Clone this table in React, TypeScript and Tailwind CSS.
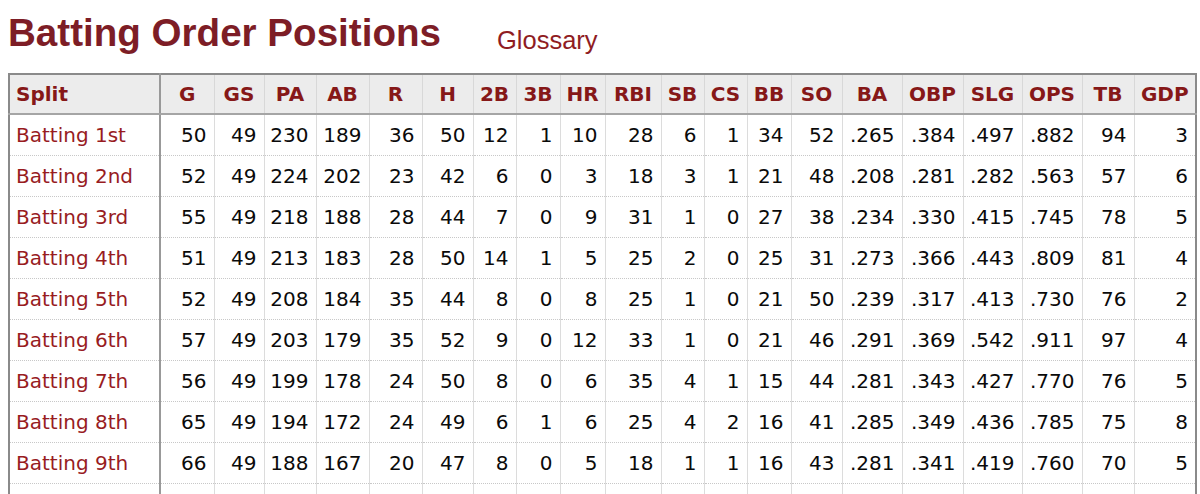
import React from 'react';

const cols = [
  { k: 'G', w: 'w-[54px]' },
  { k: 'GS', w: 'w-[50px]' },
  { k: 'PA', w: 'w-[52px]' },
  { k: 'AB', w: 'w-[53px]' },
  { k: 'R', w: 'w-[53px]' },
  { k: 'H', w: 'w-[51px]' },
  { k: '2B', w: 'w-[43px]' },
  { k: '3B', w: 'w-[44px]' },
  { k: 'HR', w: 'w-[45px]' },
  { k: 'RBI', w: 'w-[56px]' },
  { k: 'SB', w: 'w-[43px]' },
  { k: 'CS', w: 'w-[43px]' },
  { k: 'BB', w: 'w-[44px]' },
  { k: 'SO', w: 'w-[51px]' },
  { k: 'BA', w: 'w-[60px]' },
  { k: 'OBP', w: 'w-[61px]' },
  { k: 'SLG', w: 'w-[59px]' },
  { k: 'OPS', w: 'w-[60px]' },
  { k: 'TB', w: 'w-[52px]' },
  { k: 'GDP', w: 'w-[62px]' },
];

const rows: [string, string][] = [
  ['Batting 1st', '50 49 230 189 36 50 12 1 10 28 6 1 34 52 .265 .384 .497 .882 94 3'],
  ['Batting 2nd', '52 49 224 202 23 42 6 0 3 18 3 1 21 48 .208 .281 .282 .563 57 6'],
  ['Batting 3rd', '55 49 218 188 28 44 7 0 9 31 1 0 27 38 .234 .330 .415 .745 78 5'],
  ['Batting 4th', '51 49 213 183 28 50 14 1 5 25 2 0 25 31 .273 .366 .443 .809 81 4'],
  ['Batting 5th', '52 49 208 184 35 44 8 0 8 25 1 0 21 50 .239 .317 .413 .730 76 2'],
  ['Batting 6th', '57 49 203 179 35 52 9 0 12 33 1 0 21 46 .291 .369 .542 .911 97 4'],
  ['Batting 7th', '56 49 199 178 24 50 8 0 6 35 4 1 15 44 .281 .343 .427 .770 76 5'],
  ['Batting 8th', '65 49 194 172 24 49 6 1 6 25 4 2 16 41 .285 .349 .436 .785 75 8'],
  ['Batting 9th', '66 49 188 167 20 47 8 0 5 18 1 1 16 43 .281 .341 .419 .760 70 5'],
];

export default function App() {
  return (
    <div className="bg-white h-[494px] overflow-hidden pl-[8px] font-['DejaVu_Sans',Verdana,sans-serif]">
      <div className="flex items-baseline h-[73px] pt-[13px]">
        <h2 className="font-['Liberation_Sans',Arial,sans-serif] font-bold text-[38.6px] leading-[40px] text-[#7d1d26]">
          Batting Order Positions
        </h2>
        <span className="ml-[56px] relative top-[3px] font-['Liberation_Sans',Arial,sans-serif] text-[25.5px] text-[#8f1c22]">
          Glossary
        </span>
      </div>
      <table className="table-fixed border-collapse w-[1189px] border-2 border-[#8a8a8a] text-[20px]">
        <colgroup>
          <col className="w-[151px]" />
          {cols.map((c) => (
            <col key={c.k} className={c.w} />
          ))}
        </colgroup>
        <thead>
          <tr className="bg-[#ececec]">
            <th className="h-[40px] text-left pl-[6px] font-bold text-[#861818] border-r-2 border-r-[#999] border-b-2 border-b-[#a5a5a5]">
              Split
            </th>
            {cols.map((c) => (
              <th
                key={c.k}
                className="h-[40px] text-center font-bold text-[#861818] border-l border-l-[#d8d8d8] border-b-2 border-b-[#a5a5a5] whitespace-nowrap"
              >
                {c.k}
              </th>
            ))}
          </tr>
        </thead>
        <tbody>
          {rows.map(([name, vals]) => (
            <tr key={name}>
              <td className="h-[41px] pl-[6px] text-[#981c1f] border-r-2 border-r-[#999] border-b border-b-[#c8c8c8] [border-bottom-style:dotted] whitespace-nowrap">
                {name}
              </td>
              {vals.split(' ').map((v, i) => (
                <td
                  key={i}
                  className="h-[41px] text-right pr-[7px] text-[#0a0a0a] border-l border-l-[#dcdcdc] border-b border-b-[#c8c8c8] [border-bottom-style:dotted] whitespace-nowrap"
                >
                  {v}
                </td>
              ))}
            </tr>
          ))}
          <tr>
            <td className="h-[41px] border-r-2 border-r-[#999]"></td>
            {cols.map((c) => (
              <td key={c.k} className="h-[41px] border-l border-l-[#dcdcdc]"></td>
            ))}
          </tr>
        </tbody>
      </table>
    </div>
  );
}
